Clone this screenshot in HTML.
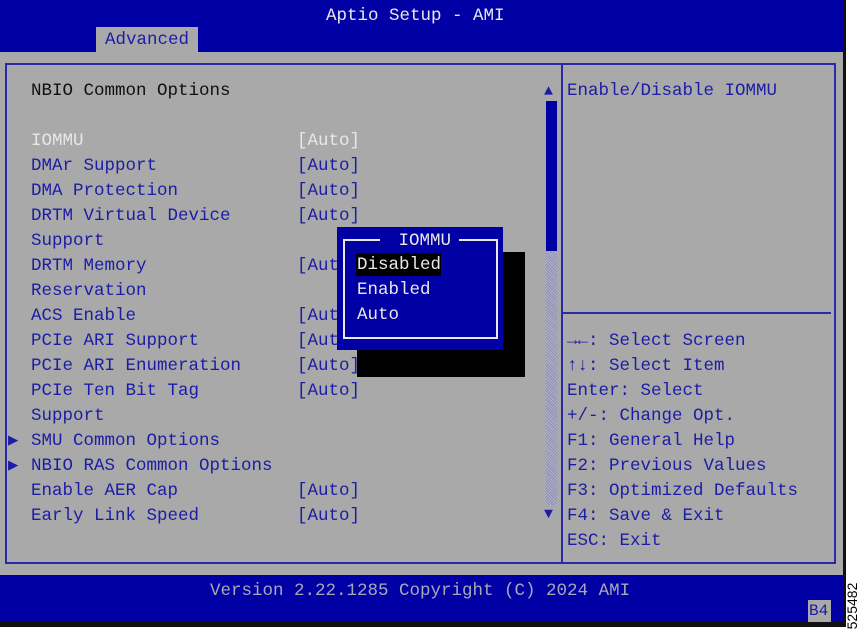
<!DOCTYPE html>
<html><head><meta charset="utf-8"><style>
*{margin:0;padding:0;box-sizing:border-box}
body{width:861px;height:627px;background:#fff;position:relative;overflow:hidden;font-family:"Liberation Mono","DejaVu Sans Mono",monospace;font-size:17.5px}
.a{position:absolute;white-space:pre;line-height:25px}
.b{color:#1c1ca6}
.w{color:#e8e8e8}
</style></head><body>
<div style="position:absolute;left:0;top:0;width:846px;height:627px;background:#0000a4;border-right:3px solid #111"></div>
<div style="position:absolute;left:0;top:52px;width:843px;height:523px;background:#a9a9a9"></div>
<div class="a w" style="left:326px;top:4px">Aptio Setup - AMI</div>
<div style="position:absolute;left:96px;top:27px;width:102px;height:25px;background:#a9a9a9"></div>
<div class="a b" style="left:105px;top:28px">Advanced</div>
<div style="position:absolute;left:5px;top:63px;width:831px;height:501px;border:2px solid #2a2aa8"></div>
<div style="position:absolute;left:561px;top:63px;width:2px;height:501px;background:#2a2aa8"></div>
<div style="position:absolute;left:563px;top:312px;width:268px;height:2px;background:#2a2aa8"></div>
<div style="position:absolute;left:546px;top:101px;width:11px;height:150px;background:#0000a4"></div>
<div style="position:absolute;left:546px;top:251px;width:11px;height:254px;background:repeating-linear-gradient(45deg,#8c8cb4 0 1px,#b4b4c4 1px 2px)"></div>
<div class="a b" style="left:544px;top:79px;font-size:15px">▲</div>
<div class="a b" style="left:544px;top:502px;font-size:15px">▼</div>
<div class="a" style="left:31px;top:79px;color:#101010">NBIO Common Options</div>
<div class="a w" style="left:31px;top:129px">IOMMU</div>
<div class="a w" style="left:297px;top:129px">[Auto]</div>
<div class="a b" style="left:31px;top:154px">DMAr Support
DMA Protection
DRTM Virtual Device
Support
DRTM Memory
Reservation
ACS Enable
PCIe ARI Support
PCIe ARI Enumeration
PCIe Ten Bit Tag
Support
SMU Common Options
NBIO RAS Common Options
Enable AER Cap
Early Link Speed</div>
<div class="a b" style="left:297px;top:154px">[Auto]
[Auto]
[Auto]

[Auto]

[Auto]
[Auto]
[Auto]
[Auto]



[Auto]
[Auto]</div>
<div class="a b" style="left:8px;top:429px;font-size:17px;line-height:25px">▶
▶</div>
<div style="position:absolute;left:357px;top:252px;width:168px;height:125px;background:#000"></div>
<div style="position:absolute;left:337px;top:227px;width:166px;height:123px;background:#0000a4"></div>
<div style="position:absolute;left:343px;top:239px;width:155px;height:100px;border:2px solid #e8e8e8"></div>
<div class="a w" style="left:380px;top:229px;background:#0000a4;padding:0 8px"> IOMMU</div>
<div style="position:absolute;left:356px;top:253px;width:85px;height:23px;background:#000"></div>
<div class="a w" style="left:357px;top:253px">Disabled
Enabled
Auto</div>
<div class="a b" style="left:567px;top:79px">Enable/Disable IOMMU</div>
<div class="a b" style="left:567px;top:329px">→←: Select Screen
↑↓: Select Item
Enter: Select
+/-: Change Opt.
F1: General Help
F2: Previous Values
F3: Optimized Defaults
F4: Save &amp; Exit
ESC: Exit</div>
<div class="a" style="left:210px;top:579px;color:#a8a8b8">Version 2.22.1285 Copyright (C) 2024 AMI</div>
<div style="position:absolute;left:808px;top:600px;width:23px;height:22px;background:#a9a9a9"></div>
<div class="a b" style="left:809px;top:599px;font-size:16px">B4</div>
<div style="position:absolute;left:0;top:622px;width:846px;height:5px;background:#111"></div>
<div style="position:absolute;left:844px;top:598px;transform:rotate(-90deg);transform-origin:center;font-family:'Liberation Sans',sans-serif;font-size:14px;color:#000;width:52px;text-align:center;margin-left:-18px">525482</div>
</body></html>
